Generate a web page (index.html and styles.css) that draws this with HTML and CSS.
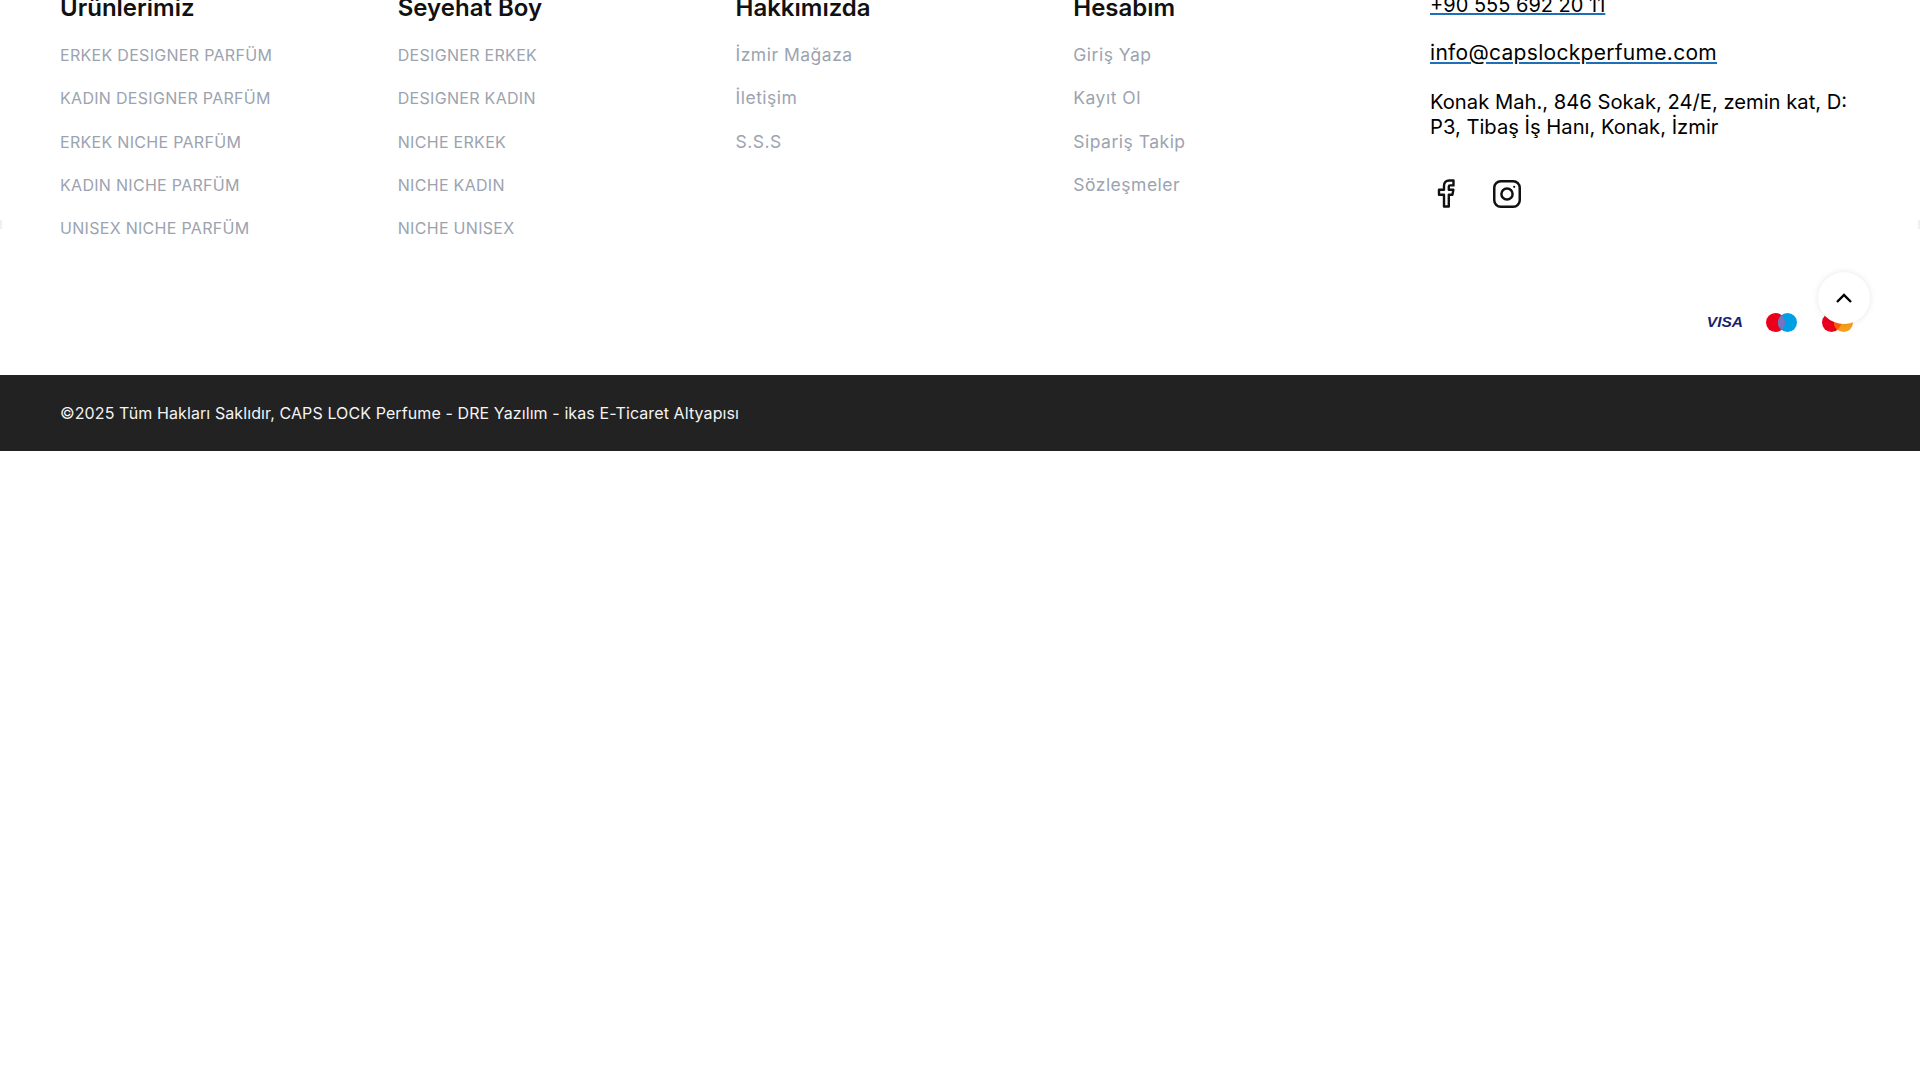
FILE: index.html
```html
<!DOCTYPE html>
<html>

<head>
  <title>CAPS LOCK Perfume</title>
  <meta charset="utf-8">
  <link rel="stylesheet" href="styles.css">
</head>

<body>
  <footer class="footer">
    <div class="footer-top">
      <div class="footer-col">
        <h4>Ürünlerimiz</h4>
        <a href="#">ERKEK DESIGNER PARFÜM</a>
        <a href="#">KADIN DESIGNER PARFÜM</a>
        <a href="#">ERKEK NICHE PARFÜM</a>
        <a href="#">KADIN NICHE PARFÜM</a>
        <a href="#">UNISEX NICHE PARFÜM</a>
      </div>
      <div class="footer-col">
        <h4>Seyehat Boy</h4>
        <a href="#">DESIGNER ERKEK</a>
        <a href="#">DESIGNER KADIN</a>
        <a href="#">NICHE ERKEK</a>
        <a href="#">NICHE KADIN</a>
        <a href="#">NICHE UNISEX</a>
      </div>
      <div class="footer-col footer-col-mixed">
        <h4>Hakkımızda</h4>
        <a href="#">İzmir Mağaza</a>
        <a href="#">İletişim</a>
        <a href="#">S.S.S</a>
      </div>
      <div class="footer-col footer-col-mixed">
        <h4>Hesabım</h4>
        <a href="#">Giriş Yap</a>
        <a href="#">Kayıt Ol</a>
        <a href="#">Sipariş Takip</a>
        <a href="#">Sözleşmeler</a>
      </div>
      <div class="contact">
        <a class="contact-link" href="#">+90 555 692 20 11</a>
        <a class="contact-link contact-email" href="#">info@capslockperfume.com</a>
        <p class="address">Konak Mah., 846 Sokak, 24/E, zemin kat, D: P3, Tibaş İş Hanı, Konak, İzmir</p>
        <div class="social">
          <a href="#" class="social-fb">
            <svg width="18" height="29" viewBox="0 0 18 29" fill="none" stroke="#111" stroke-width="2.4" stroke-linejoin="round">
              <path d="M16.5 1.5h-4.3c-3.2 0-5.2 2-5.2 5.2v4H2v5h5v11.8h4.8V15.7h3.6l1-5h-4.6V7.6c0-.8.5-1.2 1.2-1.2h3.5z" />
            </svg>
          </a>
          <a href="#" class="social-ig">
            <svg width="28" height="28" viewBox="0 0 28 28" fill="none" stroke="#111" stroke-width="2.5">
              <rect x="1.25" y="1.25" width="25.5" height="25.5" rx="6.5" />
              <circle cx="14" cy="14" r="5.6" />
              <circle cx="21.2" cy="6.8" r="1.1" fill="#111" stroke="none" />
            </svg>
          </a>
        </div>
      </div>
    </div>

    <div class="payments">
      <span class="visa">VISA</span>
      <svg width="31" height="19" viewBox="0 0 31 19">
        <circle cx="9.5" cy="9.5" r="9.5" fill="#eb001b" />
        <circle cx="21.5" cy="9.5" r="9.5" fill="#009ee2" />
        <path d="M15.5 2.13a9.5 9.5 0 0 1 0 14.74a9.5 9.5 0 0 1 0-14.74z" fill="#7673c0" />
      </svg>
      <svg width="31" height="19" viewBox="0 0 31 19">
        <circle cx="9.5" cy="9.5" r="9.5" fill="#eb001b" />
        <circle cx="21.5" cy="9.5" r="9.5" fill="#f79e1b" />
        <path d="M15.5 2.13a9.5 9.5 0 0 1 0 14.74a9.5 9.5 0 0 1 0-14.74z" fill="#ff5f00" />
      </svg>
    </div>

    <div class="copyright">©2025 Tüm Hakları Saklıdır, CAPS LOCK Perfume - DRE Yazılım - ikas E-Ticaret Altyapısı</div>

    <span class="edge edge-left"></span>
    <span class="edge edge-right"></span>

    <a href="#" class="to-top">
      <svg width="16" height="10" viewBox="0 0 16 10" fill="none" stroke="#000" stroke-width="2.4">
        <path d="M1 9l7-7 7 7" />
      </svg>
    </a>
  </footer>
</body>

</html>
```

FILE: styles.css
```css
body {
  margin: 0;
  background-color: #fff;
  font-family: Inter, "Liberation Sans", sans-serif;
  overflow: hidden;
}

.footer {
  position: relative;
  margin-top: -8px;
}

.footer-top {
  display: grid;
  grid-template-columns: repeat(4, 337.75px) 1fr;
  padding: 0 60px;
}

.footer-col {
  display: flex;
  flex-direction: column;
  align-items: flex-start;
  gap: 19.2px;
}

.footer-col h4 {
  margin: 0;
  font-size: 24px;
  line-height: 32px;
  font-weight: 600;
  color: #111;
}

.footer-col a {
  font-size: 16px;
  line-height: 24px;
  font-weight: 400;
  letter-spacing: 0.3px;
  color: #9ca3af;
  text-decoration: none;
}

.footer-col-mixed a {
  font-size: 17.5px;
  letter-spacing: 0.5px;
}

.contact {
  display: flex;
  flex-direction: column;
  align-items: flex-start;
  margin-top: -1px;
  padding-left: 19px;
}

.contact-link {
  margin-bottom: 20px;
  font-size: 20px;
  line-height: 28px;
  color: #000;
  text-decoration: underline;
  text-decoration-color: #1f6fb8;
}

.contact-email {
  font-size: 21px;
  letter-spacing: 0.3px;
}

.address {
  margin: 2px 0 40px 0;
  font-size: 20.2px;
  line-height: 25px;
  color: #000;
}

.social {
  display: flex;
  align-items: center;
  gap: 38px;
  padding-left: 7px;
}

.social a {
  display: flex;
}

.payments {
  display: flex;
  justify-content: flex-end;
  align-items: center;
  gap: 25px;
  height: 19px;
  margin-top: 73px;
  padding-right: 67px;
}

.visa {
  margin-right: -2px;
  font-family: "Liberation Sans", sans-serif;
  font-size: 15.5px;
  font-weight: 700;
  font-style: italic;
  color: #1a1f71;
}

.copyright {
  margin-top: 43px;
  padding: 0 60px;
  height: 76px;
  display: flex;
  align-items: center;
  background-color: #222;
  color: #f4f4f4;
  font-size: 16px;
  letter-spacing: 0.1px;
}

.edge {
  position: absolute;
  top: 228px;
  width: 2px;
  height: 9px;
  background-color: #f0f0f0;
}

.edge-left {
  left: 0;
}

.edge-right {
  right: 0;
}

.to-top {
  position: absolute;
  top: 280px;
  right: 50px;
  width: 52px;
  height: 52px;
  display: flex;
  align-items: center;
  justify-content: center;
  border-radius: 50%;
  background-color: #fff;
  box-shadow: 0 0 6px rgba(0, 0, 0, 0.1);
}
```
